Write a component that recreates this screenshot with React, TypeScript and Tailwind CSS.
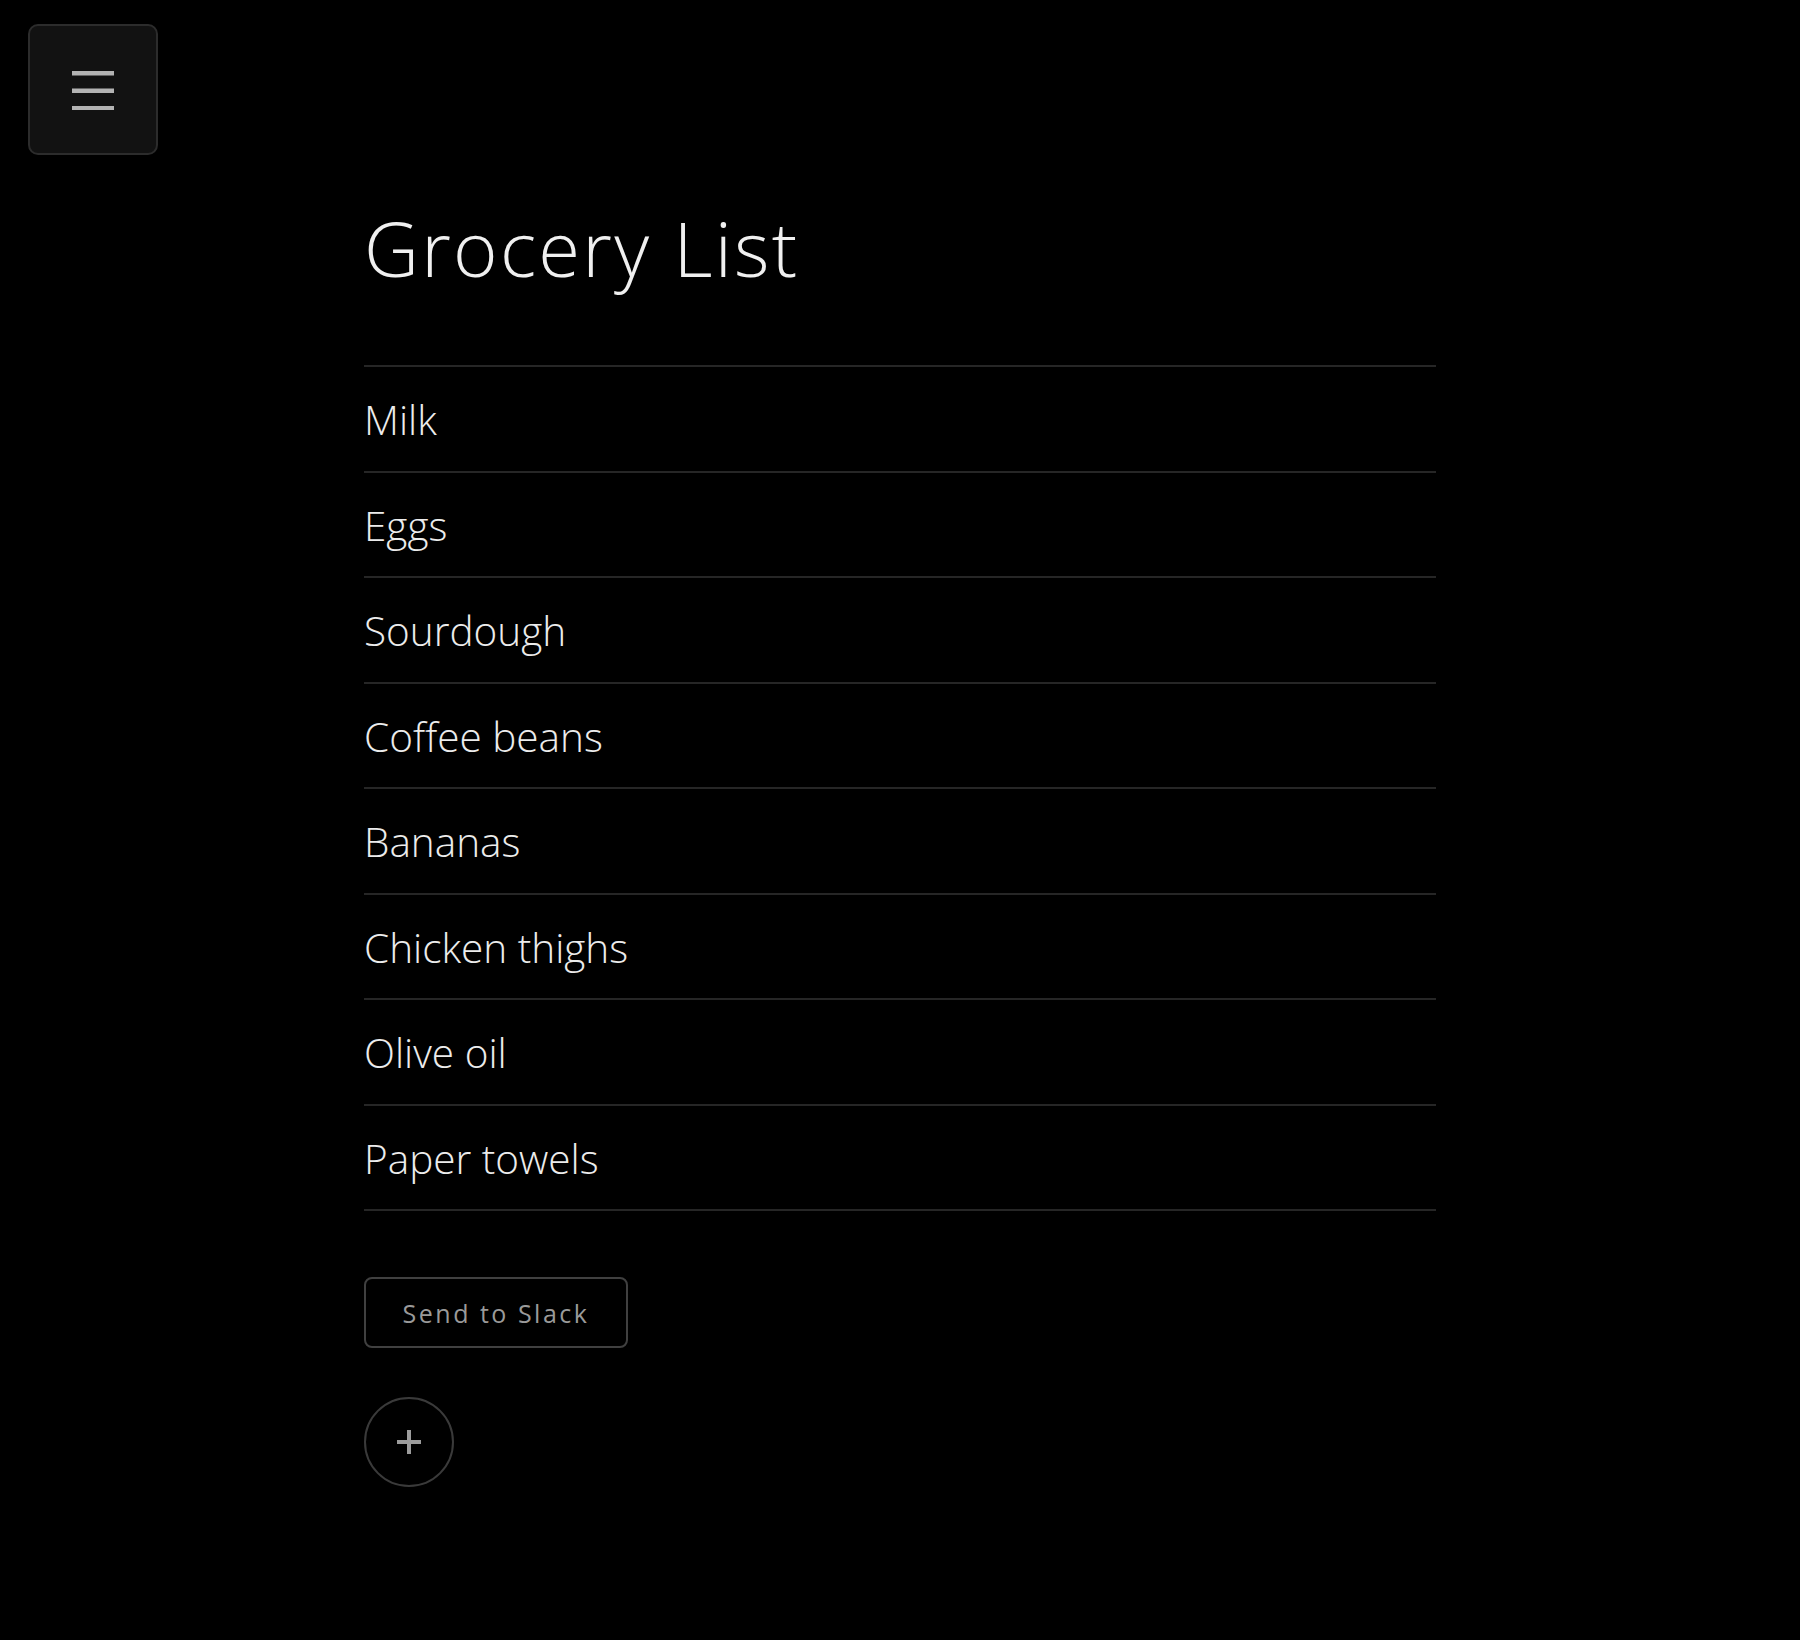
import { useState } from 'react';

const items = [
  'Milk',
  'Eggs',
  'Sourdough',
  'Coffee beans',
  'Bananas',
  'Chicken thighs',
  'Olive oil',
  'Paper towels',
];

export default function App() {
  const [list] = useState(items);

  return (
    <div className="min-h-[1640px] bg-black text-[#ececec] font-['Open_Sans','Segoe_UI',sans-serif]">
      {/* Floating menu toggle */}
      <button className="fixed top-[24px] left-[28px] w-[130px] h-[131px] rounded-[10px] bg-[#121212] border-2 border-[#2c2c2c] flex items-center justify-center">
        <svg width="42" height="40" viewBox="0 0 42 40">
          <rect x="0" y="1" width="42" height="4.5" fill="#b3b3b3" />
          <rect x="0" y="18.5" width="42" height="4.5" fill="#b3b3b3" />
          <rect x="0" y="36" width="42" height="4.5" fill="#b3b3b3" />
        </svg>
      </button>

      <main className="mx-auto w-[1072px] pt-[210px] pb-20">
        <h1 className="text-[76px] leading-[76px] font-light tracking-[0.03em] text-[#f0f0f0]">Grocery List</h1>

        <ul className="mt-[79px] border-t-2 border-[#262626]">
          {list.map((item) => (
            <li
              key={item}
              className="h-[105.5px] pt-[4px] flex items-center border-b-2 border-[#262626] text-[40.5px] font-light text-[#ececec]"
            >
              {item}
            </li>
          ))}
        </ul>

        <button className="mt-[66px] w-[264px] h-[71px] rounded-[8px] border-2 border-[#404040] text-[25px] tracking-[0.1em] text-[#9a9a9a] flex items-center justify-center pt-[3px]">
          Send to Slack
        </button>

        <button className="mt-[49px] w-[90px] h-[90px] rounded-full border-2 border-[#3a3a3a] flex items-center justify-center">
          <svg width="26" height="26" viewBox="0 0 26 26">
            <rect x="11" y="1" width="4" height="24" fill="#9c9c9c" />
            <rect x="1" y="11" width="24" height="4" fill="#9c9c9c" />
          </svg>
        </button>
      </main>
    </div>
  );
}
